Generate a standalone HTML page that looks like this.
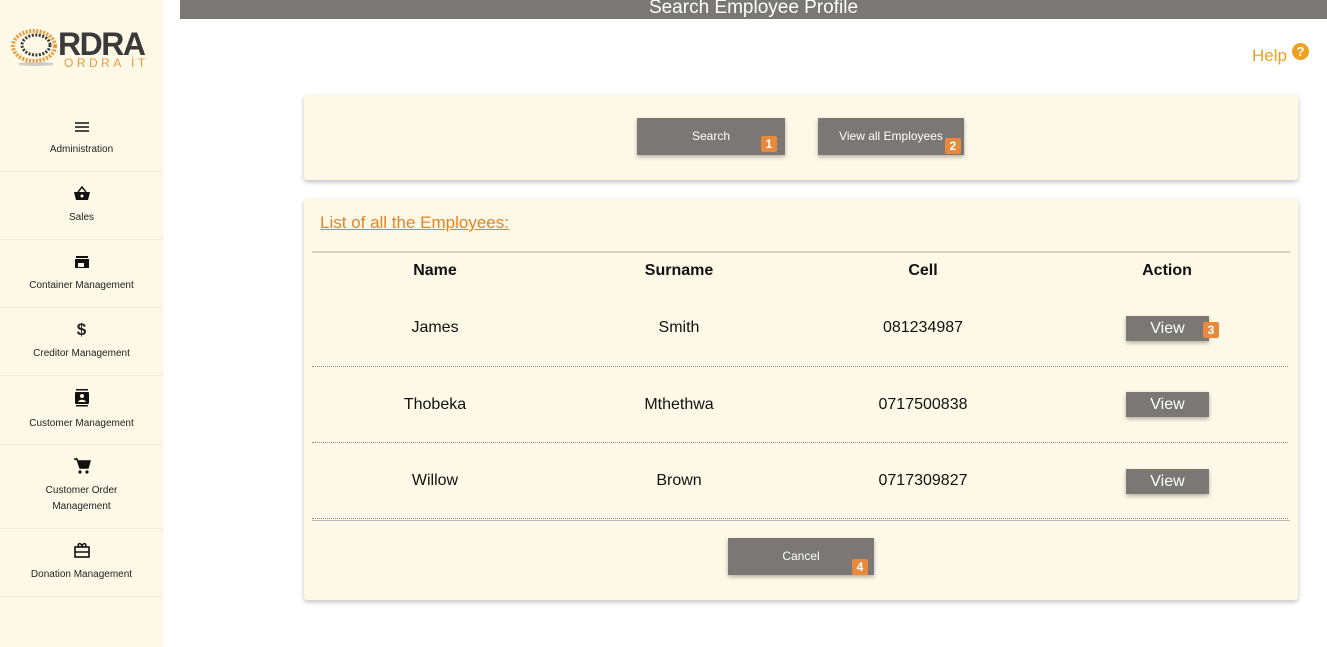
<!DOCTYPE html>
<html><head><meta charset="utf-8"><style>
*{margin:0;padding:0;box-sizing:border-box}
body{width:1327px;height:647px;background:#fff;font-family:"Liberation Sans",sans-serif;position:relative;overflow:hidden}
.side{position:absolute;left:0;top:0;width:163px;height:647px;background:#fef9e7}
.item{position:absolute;left:0;width:163px;border-bottom:1px solid #efe9d6;text-align:center;font-size:10px;color:#222;line-height:16px}
.item svg{display:block;margin:0 auto 8px}
.top{position:absolute;left:180px;top:0;width:1147px;height:19px;background:#7a7774;color:#fff;text-align:center;font-size:19px;line-height:16px}
.card{position:absolute;left:304px;width:994px;background:#fef9e6;border-radius:3px;box-shadow:0 2px 5px rgba(0,0,0,.25)}
.btn{position:absolute;background:#7a7774;color:#fff;font-size:12px;text-align:center;box-shadow:0 2px 4px rgba(0,0,0,.3)}
.badge{position:absolute;background:#e8893c;color:#fff;font-size:12px;font-weight:bold;width:16px;height:16px;line-height:16px;text-align:center;border-radius:2px}
.c{position:absolute;width:200px;text-align:center;font-size:16px;color:#111}
.h{font-weight:bold}
.dot{position:absolute;left:312px;width:976px;border-top:1px dotted #888}
</style></head><body>
<div class="side">
 <svg style="position:absolute;left:10px;top:26px" width="50" height="44" viewBox="0 0 50 44">
  <ellipse cx="24" cy="20" rx="21" ry="15" fill="none" stroke="#e89a3c" stroke-width="4" stroke-dasharray="2 1.5"/>
  <ellipse cx="26" cy="19" rx="14" ry="10" fill="none" stroke="#3a3a3a" stroke-width="3" stroke-dasharray="2 1.5"/>
  <ellipse cx="26" cy="38" rx="18" ry="2" fill="#ccc"/>
 </svg>
 <div style="position:absolute;left:58px;top:27px;font-size:32px;font-weight:bold;color:#3a3a3a;letter-spacing:-1.5px;line-height:34px">RDRA</div>
 <div style="position:absolute;left:64px;top:56px;font-size:12px;color:#e89a3c;letter-spacing:3.5px">ORDRA İT</div>
 <div class="item" style="top:104px;height:68px;padding-top:16px"><svg width="16" height="14" viewBox="0 0 16 14"><path d="M1 3h14M1 7h14M1 11h14" stroke="#111" stroke-width="1.6"/></svg>Administration</div>
 <div class="item" style="top:172px;height:68px;padding-top:14px"><svg width="18" height="16" viewBox="0 0 18 16"><path d="M5 6L9 1L13 6" fill="none" stroke="#111" stroke-width="1.5"/><path d="M1 6h16l-2 8H3z" fill="#111"/><circle cx="9" cy="10" r="1.5" fill="#fef9e7"/></svg>Sales</div>
 <div class="item" style="top:240px;height:68px;padding-top:14px"><svg width="16" height="16" viewBox="0 0 16 16"><rect x="2" y="2" width="12" height="2" fill="#111"/><path d="M1 5h14v9H1z" fill="#111"/><rect x="4" y="9" width="6" height="4" fill="#fef9e7"/></svg>Container Management</div>
 <div class="item" style="top:308px;height:68px;padding-top:12px"><div style="font-size:17px;font-weight:bold;line-height:20px;margin-bottom:6px">$</div>Creditor Management</div>
 <div class="item" style="top:376px;height:69px;padding-top:12px"><svg width="16" height="20" viewBox="0 0 16 20"><rect x="2" y="1" width="12" height="1.5" fill="#111"/><rect x="2" y="17" width="12" height="1.5" fill="#111"/><rect x="1" y="4" width="14" height="12" rx="1" fill="#111"/><circle cx="8" cy="8" r="2" fill="#fef9e7"/><path d="M4 14c1-3 7-3 8 0z" fill="#fef9e7"/></svg>Customer Management</div>
 <div class="item" style="top:445px;height:84px;padding-top:12px"><svg width="18" height="18" viewBox="0 0 18 18"><path d="M1 2h3l3 9h8l2-7H5" fill="#111" stroke="#111" stroke-width="1.5"/><circle cx="7" cy="15" r="1.6" fill="#111"/><circle cx="14" cy="15" r="1.6" fill="#111"/></svg>Customer Order<br>Management</div>
 <div class="item" style="top:529px;height:68px;padding-top:12px"><svg width="18" height="18" viewBox="0 0 18 18"><rect x="2" y="6" width="14" height="10" fill="none" stroke="#111" stroke-width="1.6"/><path d="M2 11h14M6 6c-3-4 3-5 3 0c0-5 6-4 3 0" fill="none" stroke="#111" stroke-width="1.5"/></svg>Donation Management</div>
</div>
<div class="top">Search Employee Profile</div>
<div style="position:absolute;left:1252px;top:46px;color:#f0a020;font-size:17px">Help</div>
<div style="position:absolute;left:1292px;top:43px;width:17px;height:17px;border-radius:50%;background:#f0a020;color:#fff;font-size:13px;font-weight:bold;text-align:center;line-height:17px">?</div>
<div class="card" style="top:95px;height:85px"></div>
<div class="btn" style="left:637px;top:118px;width:148px;height:37px;line-height:37px">Search</div>
<div class="badge" style="left:761px;top:136px">1</div>
<div class="btn" style="left:818px;top:118px;width:146px;height:37px;line-height:37px">View all Employees</div>
<div class="badge" style="left:945px;top:138px">2</div>
<div class="card" style="top:199px;height:401px"></div>
<div style="position:absolute;left:320px;top:213px;color:#e0842c;font-size:17px;text-decoration:underline">List of all the Employees:</div>
<div style="position:absolute;left:312px;top:251px;width:978px;border-top:2px solid #d8d0bf"></div>
<div class="c h" style="left:335px;top:262px">Name</div>
<div class="c h" style="left:579px;top:262px">Surname</div>
<div class="c h" style="left:823px;top:262px">Cell</div>
<div class="c h" style="left:1067px;top:262px">Action</div>
<div class="c" style="left:335px;top:319px">James</div>
<div class="c" style="left:579px;top:319px">Smith</div>
<div class="c" style="left:823px;top:319px">081234987</div>
<div class="btn" style="left:1126px;top:316px;width:83px;height:25px;line-height:25px;font-size:16px">View</div>
<div class="badge" style="left:1203px;top:322px">3</div>
<div class="dot" style="top:366px"></div>
<div class="c" style="left:335px;top:396px">Thobeka</div>
<div class="c" style="left:579px;top:396px">Mthethwa</div>
<div class="c" style="left:823px;top:396px">0717500838</div>
<div class="btn" style="left:1126px;top:392px;width:83px;height:25px;line-height:25px;font-size:16px">View</div>
<div class="dot" style="top:442px"></div>
<div class="c" style="left:335px;top:472px">Willow</div>
<div class="c" style="left:579px;top:472px">Brown</div>
<div class="c" style="left:823px;top:472px">0717309827</div>
<div class="btn" style="left:1126px;top:469px;width:83px;height:25px;line-height:25px;font-size:16px">View</div>
<div class="dot" style="top:518px"></div>
<div style="position:absolute;left:312px;top:520px;width:978px;border-top:1px solid #bbb"></div>
<div class="btn" style="left:728px;top:538px;width:146px;height:37px;line-height:37px">Cancel</div>
<div class="badge" style="left:852px;top:559px">4</div>
</body></html>
